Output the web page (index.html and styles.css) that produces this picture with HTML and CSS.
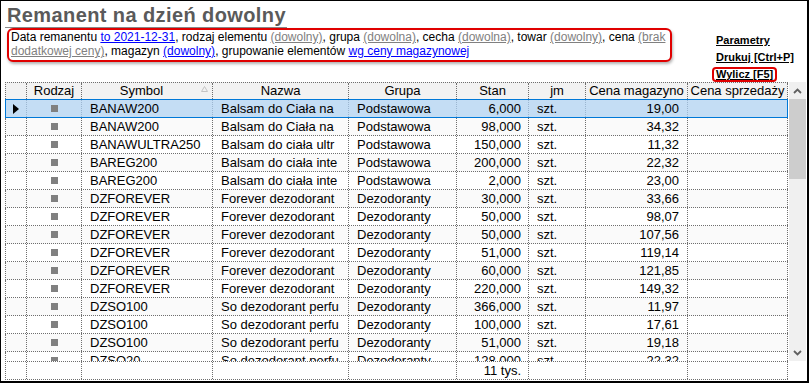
FILE: index.html
```html
<!DOCTYPE html>
<html lang="pl">
<head>
<meta charset="utf-8">
<title>Remanent na dzień dowolny</title>
<link rel="stylesheet" href="styles.css">
</head>
<body>
<div class="frame">
  <div class="top">
    <div class="left">
      <div class="title">Remanent na dzień dowolny</div>
      <div class="filter">Data remanentu <a class="lnk" href="#">to 2021-12-31</a>, rodzaj elementu <a class="def" href="#">(dowolny)</a>, grupa <a class="def" href="#">(dowolna)</a>, cecha <a class="def" href="#">(dowolna)</a>, towar <a class="def" href="#">(dowolny)</a>, cena <a class="def" href="#">(brak dodatkowej ceny)</a>, magazyn <a class="lnk" href="#">(dowolny)</a>, grupowanie elementów <a class="lnk" href="#">wg ceny magazynowej</a></div>
    </div>
    <div class="actions">
      <a class="act" href="#">Parametry</a>
      <a class="act" href="#">Drukuj [Ctrl+P]</a>
      <span class="hl"><a class="act" href="#">Wylicz [F5]</a></span>
    </div>
  </div>
  <div class="main">
    <div class="grid">
      <div class="row head">
        <div class="cell"></div>
        <div class="cell">Rodzaj</div>
        <div class="cell sort"><span>Symbol</span><svg width="7" height="6" viewBox="0 0 7 6"><polygon points="3.5,0.5 6.5,5.5 0.5,5.5" fill="none" stroke="#c4c4c4" stroke-width="1"/></svg></div>
        <div class="cell">Nazwa</div>
        <div class="cell">Grupa</div>
        <div class="cell">Stan</div>
        <div class="cell">jm</div>
        <div class="cell">Cena magazyno</div>
        <div class="cell">Cena sprzedaży</div>
      </div>
      <div class="body">
        <div class="row sel">
          <div class="cell ico"><svg width="6" height="10" viewBox="0 0 6 10"><polygon points="0,0 6,5 0,10" fill="#000"/></svg></div>
          <div class="cell ico"><i class="sq"></i></div>
          <div class="cell">BANAW200</div><div class="cell">Balsam do Ciała na</div><div class="cell">Podstawowa</div>
          <div class="cell num">6,000</div><div class="cell">szt.</div><div class="cell num2">19,00</div><div class="cell"></div>
        </div>
        <div class="row">
          <div class="cell ico"></div><div class="cell ico"><i class="sq"></i></div>
          <div class="cell">BANAW200</div><div class="cell">Balsam do Ciała na</div><div class="cell">Podstawowa</div>
          <div class="cell num">98,000</div><div class="cell">szt.</div><div class="cell num2">34,32</div><div class="cell"></div>
        </div>
        <div class="row">
          <div class="cell ico"></div><div class="cell ico"><i class="sq"></i></div>
          <div class="cell">BANAWULTRA250</div><div class="cell">Balsam do ciała ultr</div><div class="cell">Podstawowa</div>
          <div class="cell num">150,000</div><div class="cell">szt.</div><div class="cell num2">11,32</div><div class="cell"></div>
        </div>
        <div class="row">
          <div class="cell ico"></div><div class="cell ico"><i class="sq"></i></div>
          <div class="cell">BAREG200</div><div class="cell">Balsam do ciała inte</div><div class="cell">Podstawowa</div>
          <div class="cell num">200,000</div><div class="cell">szt.</div><div class="cell num2">22,32</div><div class="cell"></div>
        </div>
        <div class="row">
          <div class="cell ico"></div><div class="cell ico"><i class="sq"></i></div>
          <div class="cell">BAREG200</div><div class="cell">Balsam do ciała inte</div><div class="cell">Podstawowa</div>
          <div class="cell num">2,000</div><div class="cell">szt.</div><div class="cell num2">23,00</div><div class="cell"></div>
        </div>
        <div class="row">
          <div class="cell ico"></div><div class="cell ico"><i class="sq"></i></div>
          <div class="cell">DZFOREVER</div><div class="cell">Forever dezodorant</div><div class="cell">Dezodoranty</div>
          <div class="cell num">30,000</div><div class="cell">szt.</div><div class="cell num2">33,66</div><div class="cell"></div>
        </div>
        <div class="row">
          <div class="cell ico"></div><div class="cell ico"><i class="sq"></i></div>
          <div class="cell">DZFOREVER</div><div class="cell">Forever dezodorant</div><div class="cell">Dezodoranty</div>
          <div class="cell num">50,000</div><div class="cell">szt.</div><div class="cell num2">98,07</div><div class="cell"></div>
        </div>
        <div class="row">
          <div class="cell ico"></div><div class="cell ico"><i class="sq"></i></div>
          <div class="cell">DZFOREVER</div><div class="cell">Forever dezodorant</div><div class="cell">Dezodoranty</div>
          <div class="cell num">50,000</div><div class="cell">szt.</div><div class="cell num2">107,56</div><div class="cell"></div>
        </div>
        <div class="row">
          <div class="cell ico"></div><div class="cell ico"><i class="sq"></i></div>
          <div class="cell">DZFOREVER</div><div class="cell">Forever dezodorant</div><div class="cell">Dezodoranty</div>
          <div class="cell num">51,000</div><div class="cell">szt.</div><div class="cell num2">119,14</div><div class="cell"></div>
        </div>
        <div class="row">
          <div class="cell ico"></div><div class="cell ico"><i class="sq"></i></div>
          <div class="cell">DZFOREVER</div><div class="cell">Forever dezodorant</div><div class="cell">Dezodoranty</div>
          <div class="cell num">60,000</div><div class="cell">szt.</div><div class="cell num2">121,85</div><div class="cell"></div>
        </div>
        <div class="row">
          <div class="cell ico"></div><div class="cell ico"><i class="sq"></i></div>
          <div class="cell">DZFOREVER</div><div class="cell">Forever dezodorant</div><div class="cell">Dezodoranty</div>
          <div class="cell num">220,000</div><div class="cell">szt.</div><div class="cell num2">149,32</div><div class="cell"></div>
        </div>
        <div class="row">
          <div class="cell ico"></div><div class="cell ico"><i class="sq"></i></div>
          <div class="cell">DZSO100</div><div class="cell">So dezodorant perfu</div><div class="cell">Dezodoranty</div>
          <div class="cell num">366,000</div><div class="cell">szt.</div><div class="cell num2">11,97</div><div class="cell"></div>
        </div>
        <div class="row">
          <div class="cell ico"></div><div class="cell ico"><i class="sq"></i></div>
          <div class="cell">DZSO100</div><div class="cell">So dezodorant perfu</div><div class="cell">Dezodoranty</div>
          <div class="cell num">100,000</div><div class="cell">szt.</div><div class="cell num2">17,61</div><div class="cell"></div>
        </div>
        <div class="row">
          <div class="cell ico"></div><div class="cell ico"><i class="sq"></i></div>
          <div class="cell">DZSO100</div><div class="cell">So dezodorant perfu</div><div class="cell">Dezodoranty</div>
          <div class="cell num">51,000</div><div class="cell">szt.</div><div class="cell num2">19,18</div><div class="cell"></div>
        </div>
        <div class="row">
          <div class="cell ico"></div><div class="cell ico"><i class="sq"></i></div>
          <div class="cell">DZSO20</div><div class="cell">So dezodorant perfu</div><div class="cell">Dezodoranty</div>
          <div class="cell num">128,000</div><div class="cell">szt.</div><div class="cell num2">22,32</div><div class="cell"></div>
        </div>
      </div>
      <div class="row foot">
        <div class="cell"></div><div class="cell"></div><div class="cell"></div><div class="cell"></div><div class="cell"></div>
        <div class="cell num">11 tys.</div><div class="cell"></div><div class="cell"></div><div class="cell"></div>
      </div>
    </div>
    <div class="scroll">
      <div class="sb-btn"><svg width="9" height="6" viewBox="0 0 9 6"><polyline points="1,5 4.5,1.5 8,5" fill="none" stroke="#606060" stroke-width="1.8"/></svg></div>
      <div class="thumb"></div>
      <div class="track"></div>
      <div class="sb-btn"><svg width="9" height="6" viewBox="0 0 9 6"><polyline points="1,1 4.5,4.5 8,1" fill="none" stroke="#606060" stroke-width="1.8"/></svg></div>
    </div>
  </div>
</div>
</body>
</html>
```

FILE: styles.css
```css
* { box-sizing: border-box; }

body {
  margin: 0;
  background: #fff;
  font-family: "Liberation Sans", Arial, sans-serif;
  color: #000;
}

.frame {
  width: 809px;
  height: 383px;
  border-style: solid;
  border-color: #000;
  border-width: 1px 2px 2px 1px;
  display: flex;
  flex-direction: column;
  overflow: hidden;
}

/* ---------- top area ---------- */
.top {
  flex: none;
  height: 81px;
  display: flex;
}

.left {
  margin-left: 6px;
  width: 665px;
}

.title {
  margin: 3px 0 0 -2px;
  padding-left: 2px;
  width: 282px;
  height: 24px;
  font-size: 20px;
  line-height: 23px;
  font-weight: bold;
  letter-spacing: 0.4px;
  color: #5a5a5a;
  border-bottom: 1px solid #8a8a8a;
  white-space: nowrap;
}

.filter {
  height: 34px;
  border: 2px solid #e00000;
  border-radius: 6px;
  box-shadow: 1px 2px 3px rgba(0, 0, 0, 0.3);
  padding: 0 3px 0 2px;
  font-size: 12px;
  line-height: 14px;
  background: #fff;
}

.filter a { text-decoration: underline; }
.filter .lnk { color: #0000ff; }
.filter .def { color: #808080; }

.actions {
  margin-left: 44px;
  align-self: flex-end;
  display: flex;
  flex-direction: column;
  align-items: flex-start;
  font-size: 11px;
  font-weight: bold;
}

.act {
  color: #000;
  text-decoration: underline;
  line-height: 17px;
  white-space: nowrap;
}

.hl {
  display: block;
  margin-top: 1px;
  margin-left: -4px;
  padding: 0 2px;
  border: 2px solid #e00000;
  border-radius: 4px;
  line-height: 11px;
}

.hl .act { line-height: 11px; }

/* ---------- grid ---------- */
.main {
  flex: none;
  height: 298px;
  margin-left: 4px;
  display: flex;
}

.grid {
  width: 783px;
  display: flex;
  flex-direction: column;
}

.row {
  display: grid;
  grid-template-columns: 21px 55px 131px 136px 108px 72px 57px 102px 1fr;
  border-left: 1px dotted #6e6e6e;
}

.cell {
  border-right: 1px dotted #6e6e6e;
  overflow: hidden;
  white-space: nowrap;
  padding: 0 8px;
  font-size: 13px;
  line-height: 17px;
}

.cell.num { text-align: right; padding-right: 7px; }
.cell.num2 { text-align: right; padding-right: 8px; }

.cell.ico {
  padding: 0;
  display: flex;
  align-items: center;
  justify-content: center;
}

.sq {
  display: block;
  width: 7px;
  height: 7px;
  background: #808080;
}

.head {
  flex: none;
  height: 17px;
  border-top: 1px dotted #6e6e6e;
  background: #f2f2f2;
}

.head .cell {
  padding: 0;
  text-align: center;
  line-height: 16px;
}

.head .sort {
  display: flex;
  align-items: center;
}

.head .sort span { flex: 1; text-align: center; }
.head .sort svg { margin-right: 4px; margin-bottom: 4px; }

.body {
  flex: none;
  height: 262px;
  overflow: hidden;
}

.body .row {
  height: 18px;
  border-bottom: 1px dotted #6e6e6e;
}

.body .row:nth-child(even) { background: #fafafa; }

.body .row.sel {
  height: 19px;
  border: 1px solid #0078d7;
  background: #c4ddf4;
}

.body .row.sel .cell { border-right-color: rgba(80, 110, 140, 0.35); }
.body .row.sel .cell:last-child { border-right: none; }

.foot {
  flex: none;
  height: 19px;
  border-top: 1px dotted #6e6e6e;
  border-bottom: 1px dotted #6e6e6e;
  background: #fff;
}

/* ---------- scrollbar ---------- */
.scroll {
  margin-left: 1px;
  width: 17px;
  height: 279px;
  background: #f0f0f0;
  display: flex;
  flex-direction: column;
}

.sb-btn {
  flex: none;
  height: 17px;
  display: flex;
  align-items: center;
  justify-content: center;
}

.thumb {
  flex: none;
  height: 80px;
  background: #cdcdcd;
}

.track { flex: 1; }
```
